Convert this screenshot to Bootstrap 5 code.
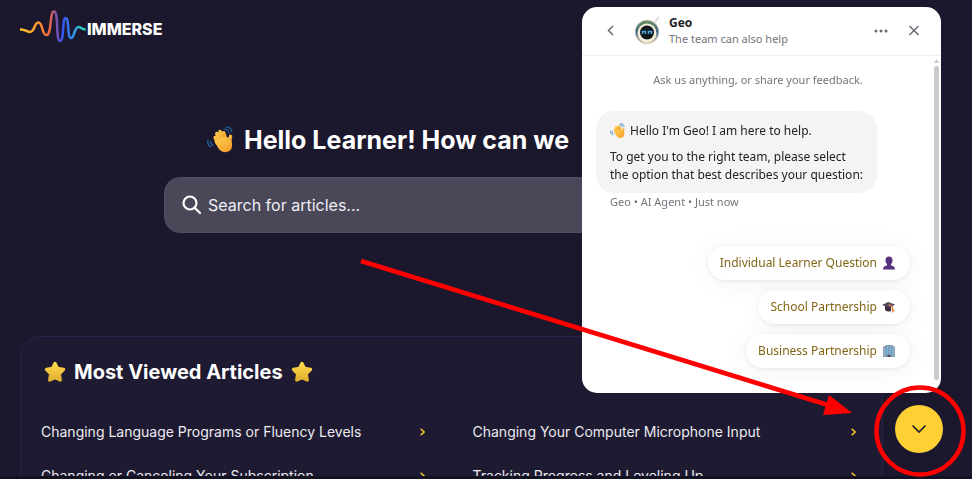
<!DOCTYPE html>
<html lang="en">
<head>
<meta charset="utf-8">
<meta name="viewport" content="width=device-width, initial-scale=1">
<title>Immerse Help Center</title>
<link href="https://cdn.jsdelivr.net/npm/bootstrap@5.3.0/dist/css/bootstrap.min.css" rel="stylesheet">
<style>
  body { background: #1b182d; color: #fff; font-family: Inter, "Liberation Sans", sans-serif; height: 100vh; overflow: hidden; }
  svg { display: block; flex: none; }
  .site { padding: 0 89px 0 20px; height: calc(100vh - 3px); overflow: hidden; }
  .brand { padding-top: 10px; height: 58px; color: #fff; font-weight: 800; font-size: 16px; line-height: 38px; text-decoration: none; }
  .hero { width: calc(100% - 288px); margin: 0 auto; }
  .hero h1 { font-size: 25px; line-height: 32px; font-weight: 700; margin: 66px 0 21px 43px; gap: 9px; white-space: nowrap; }
  .searchbox { background: #4a4759; border: 1px solid #504d60; border-radius: 16px; height: 56px; padding: 0 17px; gap: 4px; }
  .searchbox input { background: transparent; border: 0; outline: 0; color: #fff; font-size: 16px; }
  .searchbox input::placeholder { color: #f0eff4; opacity: 1; }
  .articles { background: #1d1a31; border: 1px solid #26234a; border-radius: 20px; margin-top: 103px; padding: 19px 20px; }
  .articles h2 { font-size: 20px; line-height: 32px; font-weight: 700; margin: 0 0 22px 3px; gap: 8px; }
  .articles a { color: #ecebf0; font-size: 14px; line-height: 44px; height: 44px; text-decoration: none; white-space: nowrap; padding-right: 6px; }
  .links { column-gap: 42px; display: grid; grid-template-columns: 1fr 1fr; }
  .edge { height: 3px; background: #131124; z-index: 5; }
  .chat { position: fixed; top: 7px; right: 31px; width: 359px; height: 386px; background: #fff; border-radius: 15px; overflow: hidden; font-family: "Noto Sans", sans-serif; color: #222; z-index: 10; }
  .chat header { height: 49px; border-bottom: 1px solid #f0f0f0; padding: 0 17px 0 18px; }
  .chat button { border: 0; background: transparent; padding: 0; }
  .who { font-size: 12px; line-height: 16px; margin-left: 9px; }
  .sub, .intro, .meta { font-size: 11px; }
  .muted { color: #73767c; }
  .intro { line-height: 18px; padding: 15px 0 22px; margin: 0; }
  .bubble { background: #f4f4f4; border-radius: 18px; width: 281px; padding: 11px 14px 9px; font-size: 12px; line-height: 18px; }
  .bubble p { margin: 0 0 8px; white-space: nowrap; }
  .bubble p:last-child { margin: 0; }
  .meta { line-height: 18px; padding-left: 14px; margin-bottom: 35px; }
  .replies { gap: 10px; padding-right: 10px; }
  .chat .reply { height: 34px; border-radius: 17px; background: #fff; color: #826515; font-size: 12px; padding: 0 14px 0 12px; gap: 5px; box-shadow: 0 1px 4px #00000014, 0 2px 24px #0000000f; }
  .messages { padding: 0 14px; }
  .track { width: 7px; padding-top: 3px; gap: 3px; }
  .thumb { width: 5px; height: 314px; border-radius: 3px; background: #c8cacb; }
  .launcher { position: fixed; right: 29px; bottom: 26px; width: 48px; height: 48px; border-radius: 50%; border: 0; background: #ffd033; z-index: 10; }
  .marks { position: fixed; right: 0; bottom: 0; z-index: 20; pointer-events: none; }
</style>
<script src="https://cdn.jsdelivr.net/npm/bootstrap@5.3.0/dist/js/bootstrap.bundle.min.js"></script>
</head>
<body>
<svg width="0" height="0" class="position-absolute" aria-hidden="true">
  <defs>
    <linearGradient id="wave" gradientUnits="userSpaceOnUse" x1="0" y1="0" x2="66" y2="0"><stop offset="0" stop-color="#ffc72e"/><stop offset=".25" stop-color="#ff9a2c"/><stop offset=".44" stop-color="#f5693b"/><stop offset=".56" stop-color="#7650b0"/><stop offset=".64" stop-color="#3454f4"/><stop offset=".78" stop-color="#3487e9"/><stop offset="1" stop-color="#2ce9b8"/></linearGradient>
    <linearGradient id="gold" x2="0" y2="1"><stop stop-color="#ffd94b"/><stop offset="1" stop-color="#e2b030"/></linearGradient>
    <linearGradient id="skin" x2="1" y2="1"><stop stop-color="#ffd154"/><stop offset="1" stop-color="#f49a27"/></linearGradient>
    <linearGradient id="rim" x2="0" y2="1"><stop stop-color="#6f9163"/><stop offset=".5" stop-color="#3f6585"/><stop offset="1" stop-color="#dfc9a0"/></linearGradient>
    <symbol id="star" viewBox="0 0 20 20"><path d="M10 2.200 12.300 6.800 17.800 7.600 13.900 11.600 14.800 17.300 10 15 5.200 17.300 6.100 11.600 2.200 7.600 7.700 6.800Z" fill="url(#gold)" stroke="url(#gold)" stroke-width="3" stroke-linejoin="round"/></symbol>
    <symbol id="hand" viewBox="0 0 28 28"><g fill="none" stroke="url(#skin)" stroke-linecap="round"><path d="M10 17 8.200 11.500M12.400 14 9.800 7.500M15.400 12.500 13 5.600M18.400 12.500 16.700 6.800" stroke-width="3.500"/><path d="M22 17 23.600 10.400" stroke-width="3.500"/></g><path d="M8 15Q13 9 20 11L24.500 14Q27 25 19.500 26Q13.500 27 10 20Z" fill="url(#skin)"/><path d="M11 15 9.600 12M14 13 12.200 9M17 12 15.600 8" stroke="#dc8b25" stroke-width=".6"/><g fill="none" stroke="#216aa5" stroke-width="1.200" stroke-linecap="round"><path d="M1 14Q0 19 4 21M3.500 15Q3.500 18 6 19.500M17 3Q21 3 22 7M19 1Q24 1 25 6"/></g></symbol>
  </defs>
</svg>
<main class="site">
  <a class="brand d-flex" href="#" aria-label="Immerse"><svg width="67" height="34" viewBox="0 0 67 34" fill="none" stroke="url(#wave)" stroke-width="2.500"><path d="M0 19.500C5 19 7 22 10 22C15 22 14 12.500 18.500 12.500C23 12.500 21.500 25 26.500 25C32 25 29.500 1.500 34 1.500C39 1.500 35.500 31 40 31C44.500 31 42 8 45.500 8C49.500 8 47 28 51 28C54.500 28 54 17 58.500 17C61 17 61.500 19.500 65.500 19.500"/></svg><span>IMMERSE</span></a>
  <section class="hero">
    <h1 class="d-flex align-items-center"><svg width="28" height="28" aria-hidden="true"><use href="#hand"/></svg><span>Hello Learner! How can we</span></h1>
    <label class="searchbox d-flex align-items-center"><svg width="20" height="20" viewBox="0 0 20 20" fill="none" stroke="#fff" stroke-width="2.200" stroke-linecap="round"><circle cx="8" cy="8" r="6.500"/><path d="m13 13 5 5"/></svg><input class="flex-grow-1" type="search" aria-label="Search for articles" placeholder="Search for articles..."></label>
  </section>
  <section class="articles">
    <h2 class="d-flex align-items-center"><svg width="22" height="22"><use href="#star"/></svg><span>Most Viewed Articles</span><svg width="22" height="22"><use href="#star"/></svg></h2>
    <div class="links">
      <a class="d-flex justify-content-between align-items-center" href="#">Changing Language Programs or Fluency Levels<svg width="5" height="8" viewBox="0 0 5 8" fill="none" stroke="#f0c030" stroke-width="1.600"><path d="M.7.7 4 4 .7 7.300"/></svg></a>
      <a class="d-flex justify-content-between align-items-center" href="#">Changing Your Computer Microphone Input<svg width="5" height="8" viewBox="0 0 5 8" fill="none" stroke="#f0c030" stroke-width="1.600"><path d="M.7.7 4 4 .7 7.300"/></svg></a>
      <a class="d-flex justify-content-between align-items-center" href="#">Changing or Canceling Your Subscription<svg width="5" height="8" viewBox="0 0 5 8" fill="none" stroke="#f0c030" stroke-width="1.600"><path d="M.7.7 4 4 .7 7.300"/></svg></a>
      <a class="d-flex justify-content-between align-items-center" href="#">Tracking Progress and Leveling Up<svg width="5" height="8" viewBox="0 0 5 8" fill="none" stroke="#f0c030" stroke-width="1.600"><path d="M.7.7 4 4 .7 7.300"/></svg></a>
    </div>
  </section>
</main>
<div class="edge fixed-bottom"></div>
<aside class="chat d-flex flex-column" aria-label="Chat with Geo">
  <header class="d-flex align-items-center">
    <button type="button" aria-label="Back"><svg width="22" height="20" viewBox="0 0 22 20" fill="none" stroke="#666970" stroke-width="1.500"><path d="M13 5 8.500 9.500 13 14"/></svg></button>
    <svg class="ms-2 ps-1" width="30" height="30" viewBox="2 1 26 30"><path d="m23 7 4-5" stroke="#dcdcdc" stroke-width="2"/><circle cx="15" cy="17" r="12.500" fill="#e4e2dc"/><circle cx="15" cy="17" r="11.500" fill="url(#rim)"/><circle cx="15" cy="18" r="9.500" fill="#f3edda"/><circle cx="15" cy="17.500" r="7" fill="#10161e"/><path d="M10.500 19v-2.500h3V19M16.500 19v-2.500h3V19" fill="none" stroke="#4ba6d8" stroke-width="1.500"/></svg>
    <div class="who flex-grow-1"><div class="fw-bold">Geo</div><div class="sub muted">The team can also help</div></div>
    <button type="button" aria-label="More"><svg width="14" height="14" viewBox="0 0 14 14" fill="#666970"><circle cx="2" cy="7" r="1.500"/><circle cx="7" cy="7" r="1.500"/><circle cx="12" cy="7" r="1.500"/></svg></button>
    <button type="button" class="ms-3" aria-label="Close"><svg width="20" height="20" viewBox="0 0 20 20" stroke="#666970" stroke-width="1.500"><path d="m5.500 5 9 9m0-9-9 9"/></svg></button>
  </header>
  <div class="d-flex flex-grow-1">
    <div class="messages flex-grow-1">
      <p class="intro muted text-center">Ask us anything, or share your feedback.</p>
      <div class="bubble"><p class="d-flex align-items-center"><svg class="me-1" width="16" height="16"><use href="#hand"/></svg>Hello I'm Geo! I am here to help.</p><p>To get you to the right team, please select<br>the option that best describes your question:</p></div>
      <div class="meta muted">Geo • AI Agent • Just now</div>
      <div class="replies d-flex flex-column align-items-end">
        <button type="button" class="reply d-flex align-items-center">Individual Learner Question <svg width="14" height="14" viewBox="0 0 14 14" fill="#573080"><ellipse cx="7" cy="4.500" rx="3.500" ry="4"/><path d="M5 7h4v2.500q4 .5 4 4H1q0-3.500 4-4Z"/></svg></button>
        <button type="button" class="reply d-flex align-items-center">School Partnership <svg width="14" height="14" viewBox="0 0 14 14"><path d="M3 5.500v4.500q3 2.500 6 1V6Z" fill="#382b40"/><path d="M0 5 6 2l7 2.500L8 8Z" fill="#54465f"/><path d="m6.500 4.500 4 2v6M10 7.500l2 4" fill="none" stroke="#e68745" stroke-width="1.300"/></svg></button>
        <button type="button" class="reply d-flex align-items-center">Business Partnership <svg width="14" height="14" viewBox="0 0 14 14"><path d="M1 3 4 1h6l3 2v10H1Z" fill="#9a9bb2"/><path d="M4 1h6v12H4Z" fill="#8197b5"/><path d="M2.500 4v8M5.500 2v8M8.500 2v8M11.500 4v8" stroke="#68c6e3" stroke-width="1.500" stroke-dasharray="1.500 .7"/><path d="M5.500 11h3v2h-3Z" fill="#514c68"/></svg></button>
      </div>
    </div>
    <div class="track d-flex flex-column" aria-hidden="true"><svg width="5" height="4" viewBox="0 0 5 4"><path d="M0 4 2.500 0 5 4Z" fill="#c8cacb"/></svg><div class="thumb"></div></div>
  </div>
</aside>
<button type="button" class="launcher d-flex align-items-center justify-content-center p-0" aria-label="Close chat"><svg width="16" height="10" viewBox="0 0 16 10" fill="none" stroke="#222132" stroke-width="1.700" stroke-linecap="round"><path d="m2 2 6 6 6-6"/></svg></button>
<svg class="marks" width="620" height="230" viewBox="352 249 620 230" aria-hidden="true"><path d="M361 261 828 405" stroke="#f00" stroke-width="4.500"/><path d="M829 395 823 415 852 413Z" fill="#f00"/><circle cx="920" cy="431" r="43.500" fill="none" stroke="#f00" stroke-width="4.500"/></svg>
</body>
</html>
